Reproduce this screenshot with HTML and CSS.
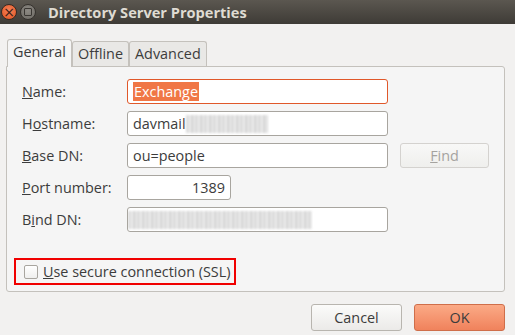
FILE: index.html
```html
<!DOCTYPE html>
<html>
<head>
	<title>Directory Server Properties</title>
	<link rel="stylesheet" href="styles.css">
</head>
<body>
	<div class="titlebar">
		<span class="wbtn close">&times;</span>
		<span class="wbtn mini"><i></i></span>
		<span class="title">Directory Server Properties</span>
	</div>
	<div class="dialog">
		<div class="tabs">
			<div class="tab active">General</div>
			<div class="tab">Offline</div>
			<div class="tab">Advanced</div>
		</div>
		<div class="panel">
			<div class="form">
				<label><u>N</u>ame:</label>
				<div class="field wide focus"><span class="sel">Exchange</span></div>
				<span></span>

				<label>H<u>o</u>stname:</label>
				<div class="field wide">davmail<span class="blur b1"></span></div>
				<span></span>

				<label><u>B</u>ase DN:</label>
				<div class="field wide">ou=people</div>
				<button class="btn find" disabled><u>F</u>ind</button>

				<label><u>P</u>ort number:</label>
				<div class="field port">1389</div>
				<span></span>

				<label>B<u>i</u>nd DN:</label>
				<div class="field wide"><span class="blur b2"></span></div>
				<span></span>
			</div>
			<div class="ssl">
				<span class="check"></span>
				<span><u>U</u>se secure connection (SSL)</span>
			</div>
		</div>
		<div class="actions">
			<button class="btn">Cancel</button>
			<button class="btn ok">OK</button>
		</div>
	</div>
</body>
</html>
```

FILE: styles.css
```css
body {
	margin: 0;
	background-color: #f2f1f0;
	font-family: "Open Sans", "DejaVu Sans", sans-serif;
	font-size: 14.4px;
	color: #3c3c3c;
}

.titlebar {
	height: 24px;
	display: flex;
	align-items: center;
	background: linear-gradient(#5b5750, #3e3b36);
	padding-left: 1px;
}

.wbtn {
	width: 16px;
	height: 16px;
	border-radius: 50%;
	display: flex;
	align-items: center;
	justify-content: center;
	margin-right: 3px;
	box-sizing: border-box;
}

.wbtn.close {
	background: radial-gradient(circle at 50% 40%, #f4825a, #e2531f);
	border: 1px solid #3a2a22;
	color: #3a2016;
	font-size: 14px;
	line-height: 1;
	font-family: "DejaVu Sans", sans-serif;
}

.wbtn.mini {
	background: radial-gradient(circle at 50% 40%, #8d8a84, #6b6862);
	border: 1px solid #35322e;
}

.wbtn.mini i {
	width: 6px;
	height: 6px;
	border: 1px solid #3a3733;
	border-radius: 1px;
}

.title {
	margin-left: 9px;
	color: #dfdbd2;
	font-weight: bold;
	font-size: 14.6px;
}

.dialog {
	padding: 15px 10px 0 6px;
}

.tabs {
	display: flex;
	padding-left: 1px;
	position: relative;
	z-index: 1;
}

.tab {
	height: 24px;
	line-height: 24px;
	padding: 0 5px;
	border: 1px solid #c4c1bc;
	border-bottom: none;
	border-radius: 3px 3px 0 0;
	background: #e9e8e6;
	margin-top: 2px;
}

.tab.active {
	background: #f5f5f5;
	margin-top: 0;
	height: 27px;
	margin-bottom: -1px;
}

.panel {
	height: 226px;
	border: 1px solid #c4c1bc;
	border-radius: 0 3px 3px 3px;
	background: #f5f5f5;
	padding: 12px 0 0 15px;
	box-sizing: border-box;
}

.form {
	display: grid;
	grid-template-columns: 105px 261px 101px;
	grid-auto-rows: 25px;
	row-gap: 7px;
	align-items: center;
}

.field {
	height: 25px;
	box-sizing: border-box;
	border: 1px solid #a8a59f;
	border-radius: 3px;
	background: #fff;
	padding: 0 5px;
	display: flex;
	align-items: center;
	overflow: hidden;
	white-space: nowrap;
}

.field.focus {
	border-color: #e0582a;
}

.field.port {
	width: 104px;
	justify-content: flex-end;
}

.sel {
	background: #f07746;
	color: #fff;
	padding: 0 1px;
	line-height: 19px;
}

.blur {
	display: inline-block;
	height: 18px;
	background: repeating-linear-gradient(90deg, #d9d9d9 0 3px, #ececec 3px 5px, #cfcfcf 5px 7px, #e4e4e4 7px 9px);
	filter: blur(0.8px);
	opacity: 0.9;
}

.blur.b1 {
	width: 82px;
}

.blur.b2 {
	width: 184px;
	margin-left: -5px;
}

.btn {
	height: 27px;
	font-family: inherit;
	font-size: 14.4px;
	color: #3c3c3c;
	border: 1px solid #b8b5af;
	border-radius: 3px;
	background: linear-gradient(#fbfbfa, #ebeae8);
	cursor: pointer;
	box-sizing: border-box;
}

.btn.find {
	width: 89px;
	height: 25px;
	margin-left: 12px;
	color: #a5a39f;
	border-color: #d4d2cf;
	background: linear-gradient(#f8f8f7, #efefed);
}

.ssl {
	margin-top: 26px;
	margin-left: -8px;
	width: 222px;
	height: 27px;
	border: 2px solid #f00000;
	box-sizing: border-box;
	display: flex;
	align-items: center;
	padding-left: 8px;
	gap: 5px;
}

.check {
	width: 12px;
	height: 12px;
	border: 1px solid #a8a59f;
	border-radius: 2px;
	background: linear-gradient(#fff, #efefee);
}

.actions {
	display: flex;
	justify-content: flex-end;
	gap: 12px;
	margin-top: 12px;
}

.actions .btn {
	width: 91px;
}

.btn.ok {
	background: linear-gradient(#fbaa86, #f0825c);
	border-color: #cf6e4a;
}
```
